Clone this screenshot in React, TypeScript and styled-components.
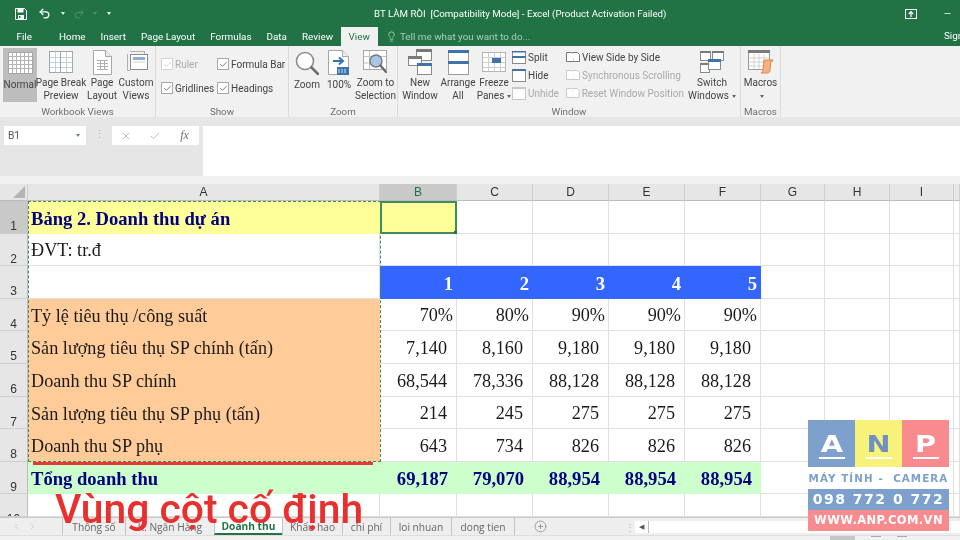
import React from 'react';
import styled, { createGlobalStyle } from 'styled-components';
import { Check, ChevronLeft, ChevronRight, CirclePlus, Lightbulb, Minus, Redo2, Undo2, X } from 'lucide-react';

const GlobalStyle = createGlobalStyle`
  html, body { margin: 0; padding: 0; background: #fff; }
  body { font-family: Roboto, "Liberation Sans", sans-serif; }
`;

const Page = styled.div`
  position: relative;
  width: 960px;
  height: 540px;
  overflow: hidden;
  display: flex;
  flex-direction: column;
  background: #f1f1f1;
  filter: blur(0.3px);
`;

/* title bar + tabs */
const TitleBar = styled.div`
  height: 27px;
  flex: none;
  background: #217346;
  color: #fff;
  display: flex;
  align-items: center;
  font-size: 9.7px;
`;
const QuickAccess = styled.div`
  width: 374px;
  flex: none;
  display: flex;
  align-items: center;
  padding-left: 15px;
  box-sizing: border-box;
`;
const QuickSpacer = styled.span<{ $w: number }>`
  display: inline-flex;
  width: ${p => p.$w}px;
  justify-content: center;
  align-items: center;
`;
const TinyCaret = styled.span<{ $dim?: boolean }>`
  width: 0;
  height: 0;
  border-left: 2.5px solid transparent;
  border-right: 2.5px solid transparent;
  border-top: 3px solid ${p => (p.$dim ? '#4f9270' : '#e8f2ec')};
`;
const DocTitle = styled.div`
  flex: 1;
  white-space: pre;
`;
const WindowButtons = styled.div`
  display: flex;
  align-items: center;
  gap: 26px;
  margin-right: 8px;
`;
const TabRow = styled.div`
  height: 19px;
  flex: none;
  background: #217346;
  display: flex;
  align-items: stretch;
  font-size: 9.9px;
  padding-left: 9px;
  position: relative;
`;
const RibbonTab = styled.div<{ $active?: boolean; $gap?: number }>`
  padding: 0 ${p => (p.$active ? 8 : 7.5)}px 1px;
  margin-right: ${p => p.$gap ?? 0}px;
  display: flex;
  align-items: center;
  color: ${p => (p.$active ? '#217346' : '#fff')};
  background: ${p => (p.$active ? '#f1f1f1' : 'transparent')};
`;
const TellMe = styled.div`
  display: flex;
  align-items: center;
  gap: 3px;
  margin-left: 8px;
  padding-bottom: 1px;
  color: #a9cdb9;
`;
const SignIn = styled.div`
  position: absolute;
  left: 944px;
  top: 3px;
  color: #fff;
  white-space: nowrap;
`;

/* ribbon */
const Ribbon = styled.div`
  height: 71px;
  flex: none;
  background: #f1f1f1;
  display: flex;
  color: #444;
  font-size: 10px;
`;
const Group = styled.div<{ $w: number }>`
  width: ${p => p.$w}px;
  flex: none;
  box-sizing: border-box;
  display: flex;
  flex-direction: column;
  border-right: 1px solid #dcdcdc;
`;
const GroupBody = styled.div<{ $pad?: number }>`
  height: 59px;
  box-sizing: border-box;
  padding: 2px 0 0 ${p => p.$pad ?? 0}px;
  display: flex;
  align-items: flex-start;
`;
const GroupLabel = styled.div`
  height: 12px;
  line-height: 13px;
  text-align: center;
  color: #6e6e6e;
  font-size: 9.8px;
`;
const BigButton = styled.div<{ $w: number; $active?: boolean }>`
  width: ${p => p.$w}px;
  height: 54px;
  flex: none;
  display: flex;
  flex-direction: column;
  align-items: center;
  background: ${p => (p.$active ? '#bdbdbd' : 'transparent')};
`;
const IconSlot = styled.div`
  height: 30px;
  display: flex;
  align-items: center;
  justify-content: center;
`;
const BigLabel = styled.div`
  line-height: 13px;
  text-align: center;
  white-space: pre;
`;
const ShowGrid = styled.div`
  display: grid;
  grid-template-columns: 56px 70px;
  grid-auto-rows: 24px;
  padding: 4px 0 0 5px;
`;
const CheckRow = styled.div<{ $off?: boolean }>`
  display: flex;
  align-items: center;
  gap: 2px;
  color: ${p => (p.$off ? '#aaa' : '#444')};
  white-space: nowrap;
`;
const CheckBox = styled.span<{ $off?: boolean }>`
  width: 10px;
  height: 10px;
  flex: none;
  background: #fff;
  border: 1px solid ${p => (p.$off ? '#d4d4d4' : '#a8a8a8')};
  display: flex;
  align-items: center;
  justify-content: center;
  color: ${p => (p.$off ? '#c4c4c4' : '#555')};
`;
const SmallColumn = styled.div<{ $w: number }>`
  width: ${p => p.$w}px;
  flex: none;
  display: flex;
  flex-direction: column;
`;
const SmallRow = styled.div<{ $off?: boolean }>`
  height: 18px;
  display: flex;
  align-items: center;
  gap: 2px;
  white-space: nowrap;
  color: ${p => (p.$off ? '#aaa' : '#444')};
`;
const Caret = styled.span`
  display: inline-block;
  width: 0;
  height: 0;
  margin-left: 3px;
  vertical-align: middle;
  border-left: 2.5px solid transparent;
  border-right: 2.5px solid transparent;
  border-top: 3px solid #666;
`;

/* formula bar */
const FormulaArea = styled.div`
  height: 67px;
  flex: none;
  background: #e6e6e6;
  display: flex;
  align-items: flex-start;
  padding-top: 9px;
  box-sizing: border-box;
  border-bottom: 8px solid #f0f0f0;
`;
const NameBox = styled.div`
  width: 82px;
  height: 19px;
  margin-left: 4px;
  background: #fff;
  display: flex;
  align-items: center;
  justify-content: space-between;
  padding: 0 6px 0 4px;
  box-sizing: border-box;
  font-size: 10.2px;
  color: #555;
`;
const Grip = styled.div`
  width: 26px;
  height: 19px;
  flex: none;
  color: #b0b0b0;
  font-size: 11px;
  line-height: 17px;
  text-align: center;
  letter-spacing: 0;
`;
const FormulaTools = styled.div`
  width: 87px;
  height: 19px;
  background: #fff;
  display: grid;
  grid-template-columns: 28px 30px 29px;
  align-items: center;
  justify-items: center;
  color: #c0c0c0;
`;
const FxLabel = styled.span`
  font-family: "Liberation Serif", serif;
  font-style: italic;
  font-size: 12px;
  color: #707070;
`;
const FormulaInput = styled.div`
  flex: 1;
  height: 50px;
  margin-left: 4px;
  background: #fff;
`;

/* sheet */
const Sheet = styled.div`
  position: relative;
  height: 333px;
  flex: none;
  overflow: hidden;
  background: #fff;
  display: grid;
  grid-template-columns: 28px 352px 77px 76px 76px 76px 76px 64px 65px 64px 6px;
  grid-template-rows: 17px 33px 32px 33px 32px 33px 33px 32px 33px 32px 23px;
`;
const Corner = styled.div`
  background: #e6e6e6;
  border-right: 1px solid #d0d0d0;
  border-bottom: 1px solid #bcbcbc;
  position: relative;
  &::after {
    content: '';
    position: absolute;
    right: 2px;
    bottom: 2px;
    border-left: 12px solid transparent;
    border-bottom: 12px solid #b4b4b4;
  }
`;
const ColHead = styled.div<{ $active?: boolean }>`
  background: ${p => (p.$active ? '#c9c9c9' : '#e6e6e6')};
  color: ${p => (p.$active ? '#217346' : '#333')};
  border-right: 1px solid #cfcfcf;
  border-bottom: 1px solid #bcbcbc;
  font: 12px "Liberation Sans", sans-serif;
  display: flex;
  align-items: center;
  justify-content: center;
`;
const RowHead = styled.div<{ $active?: boolean }>`
  background: ${p => (p.$active ? '#c9c9c9' : '#e6e6e6')};
  color: #333;
  border-bottom: 1px solid #cfcfcf;
  border-right: 1px solid #bcbcbc;
  font: 12px/14px "Liberation Sans", sans-serif;
  text-align: center;
  padding-top: 18px;
  box-sizing: border-box;
  overflow: hidden;
`;
const Cell = styled.div<{ $fill?: string; $color?: string; $bold?: boolean; $right?: number; $selected?: boolean }>`
  position: relative;
  box-sizing: border-box;
  display: flex;
  align-items: center;
  justify-content: ${p => (p.$right !== undefined ? 'flex-end' : 'flex-start')};
  padding: 2px ${p => p.$right ?? 0}px 0 ${p => (p.$right !== undefined ? 0 : 3)}px;
  background: ${p => p.$fill ?? '#fff'};
  color: ${p => p.$color ?? '#1a1a1a'};
  font-family: "Liberation Serif", serif;
  font-size: ${p => (p.$bold ? 18.6 : 18.2)}px;
  font-weight: ${p => (p.$bold ? 700 : 400)};
  white-space: nowrap;
  ${p => (p.$fill ? '' : 'border-right: 1px solid #e0e0e0; border-bottom: 1px solid #e0e0e0;')}
  ${p =>
    p.$selected
      ? `box-shadow: inset 0 0 0 2px #3f8a5f;
         &::after {
           content: '';
           position: absolute;
           right: -1px;
           bottom: -1px;
           width: 4px;
           height: 4px;
           background: #217346;
         }`
      : ''}
`;
const CopyMarquee = styled.div`
  position: absolute;
  left: 28px;
  top: 17px;
  width: 353px;
  height: 261px;
  box-sizing: border-box;
  border: 1px dashed #3f8a5f;
  pointer-events: none;
`;
const RedUnderline = styled.div`
  position: absolute;
  left: 33px;
  top: 278px;
  width: 340px;
  height: 3px;
  background: #e53935;
`;

/* bottom */
const SheetTabs = styled.div`
  height: 18px;
  flex: none;
  background: #eeeeee;
  border-top: 1px solid #c8c8c8;
  box-sizing: border-box;
  display: flex;
  align-items: center;
  font-family: "Open Sans", sans-serif;
  font-size: 10.2px;
  color: #666;
`;
const TabNav = styled.div`
  width: 62px;
  flex: none;
  display: flex;
  padding-left: 12px;
  gap: 7px;
  box-sizing: border-box;
  color: #c4c4c4;
`;
const SheetTab = styled.div<{ $w: number; $active?: boolean }>`
  width: ${p => p.$w}px;
  height: 17px;
  flex: none;
  box-sizing: border-box;
  display: flex;
  align-items: center;
  justify-content: center;
  border-left: 1px solid #c4c4c4;
  color: ${p => (p.$active ? '#217346' : '#666')};
  font-weight: ${p => (p.$active ? 700 : 400)};
  background: ${p => (p.$active ? '#fff' : 'transparent')};
  border-bottom: ${p => (p.$active ? '2px solid #217346' : 'none')};
  white-space: nowrap;
`;
const TabEnd = styled.div`
  width: 1px;
  height: 17px;
  background: #c4c4c4;
`;
const AddSheet = styled.div`
  margin-left: 19px;
  color: #888;
  display: flex;
`;
const ScrollDots = styled.div`
  margin-left: 78px;
  color: #b4b4b4;
  font-size: 10px;
`;
const ScrollLeft = styled.div`
  margin-left: 0;
  width: 13px;
  height: 12px;
  background: #fff;
  display: flex;
  align-items: center;
  justify-content: center;
  color: #555;
  font-size: 7px;
  border-right: 1px solid #bbb;
`;
const ScrollTrack = styled.div`
  flex: 1;
  height: 12px;
  background: #fff;
`;
const StatusBar = styled.div`
  flex: 1;
  background: #f1f1f1;
  border-top: 1px solid #dedede;
  display: flex;
  padding-left: 830px;
  gap: 16px;
`;
const StatusMark = styled.div<{ $on?: boolean }>`
  width: ${p => (p.$on ? 25 : 10)}px;
  background: ${p => (p.$on ? '#c6c6c6' : 'transparent')};
  border-top: ${p => (p.$on ? 'none' : '1px solid #aaa')};
`;

/* overlays */
const Caption = styled.div`
  position: absolute;
  left: 55px;
  top: 486px;
  font-family: Roboto, "Liberation Sans", sans-serif;
  font-size: 40.8px;
  line-height: 46px;
  font-weight: 500;
  color: #e8302f;
  white-space: nowrap;
`;
const Logo = styled.div`
  position: absolute;
  left: 808px;
  top: 420px;
  width: 141px;
  display: flex;
  flex-direction: column;
  font-family: "DejaVu Sans", sans-serif;
  font-weight: 700;
`;
const LogoSquares = styled.div`
  display: grid;
  grid-template-columns: repeat(3, 47px);
  height: 47px;
`;
const LogoSquare = styled.div<{ $bg: string; $fg: string }>`
  background: ${p => p.$bg};
  color: ${p => p.$fg};
  display: flex;
  flex-direction: column;
  align-items: center;
  padding-top: 13px;
  box-sizing: border-box;
  font-size: 23px;
  line-height: 23px;
  span { display: block; transform: scaleX(1.25); }
  &::after {
    content: '';
    width: 26px;
    height: 1.5px;
    margin-top: 1px;
    background: #fff;
  }
`;
const LogoTagline = styled.div`
  height: 22px;
  line-height: 23px;
  color: #7da0cc;
  font-size: 10.3px;
  white-space: pre;
  text-align: center;
  background: #fff;
  letter-spacing: 1.1px;
`;
const LogoBand = styled.div<{ $bg: string; $size: number; $track: number }>`
  height: 21px;
  line-height: 21px;
  background: ${p => p.$bg};
  color: #fff;
  font-size: ${p => p.$size}px;
  letter-spacing: ${p => p.$track}px;
  text-align: center;
  white-space: nowrap;
`;

/* ribbon drawings */
const Line = '#a6a6a6';
const SheetGridIcon = () => (
  <svg width="25" height="22" viewBox="0 0 25 22">
    <rect x=".5" y=".5" width="24" height="21" fill="#fff" stroke={Line} />
    {[4, 8, 12, 16, 20].map(x => <path key={x} d={`M${x + 0.5} 1v20`} stroke="#b5b5b5" />)}
    {[4, 8, 12, 16].map(y => <path key={y} d={`M1 ${y + 0.5}h23`} stroke="#b5b5b5" />)}
  </svg>
);
const PageBreakIcon = () => (
  <svg width="24" height="22" viewBox="0 0 24 22">
    <rect x=".5" y=".5" width="23" height="21" fill="#fff" stroke={Line} />
    {[6, 17].map(x => <path key={x} d={`M${x + 0.5} 1v20`} stroke="#c3cfdd" />)}
    {[6, 11, 16].map(y => <path key={y} d={`M1 ${y + 0.5}h22`} stroke="#c3cfdd" />)}
    <path d="M11.5 1v20" stroke="#8da6c4" />
  </svg>
);
const PageLayoutIcon = () => (
  <svg width="19" height="25" viewBox="0 0 19 25">
    <path d="M.5.5h12l6 6v18H.5z" fill="#fff" stroke={Line} />
    <path d="M12.5.5v6h6" fill="#eee" stroke={Line} />
    {[10, 13, 16, 19].map(y => <path key={y} d={`M4 ${y + 0.5}h11`} stroke="#b0b0b0" />)}
    <path d="M7.5 10v10M11.5 10v10" stroke="#b0b0b0" />
  </svg>
);
const CustomViewsIcon = () => (
  <svg width="24" height="23" viewBox="0 0 24 23">
    <path d="M3.5 3v17M3 19.5h3M20.5 1v2M6 .5h15" stroke="#b0b0b0" fill="none" />
    <rect x="6.5" y="3.5" width="17" height="15" fill="#fff" stroke="#8a8a8a" />
    <rect x="9" y="6" width="12" height="3" fill="#8fb0d6" />
    <path d="M9 11h12" stroke="#d0d0d0" />
  </svg>
);
const MagnifierIcon = () => (
  <svg width="24" height="24" viewBox="0 0 24 24">
    <circle cx="10" cy="10" r="8.5" fill="#fff" stroke="#8c8c8c" strokeWidth="1.6" />
    <path d="M16.5 16.5L23 23" stroke="#6e6e6e" strokeWidth="2.6" strokeLinecap="round" />
  </svg>
);
const HundredIcon = () => (
  <svg width="22" height="26" viewBox="0 0 22 26">
    <path d="M.5.5h14l6 6v18H.5z" fill="#fff" stroke={Line} />
    <path d="M14.5.5v6h6" fill="#eee" stroke={Line} />
    <path d="M5 11h9M11 7.5l4 3.5-4 3.5" fill="none" stroke="#2f75b5" strokeWidth="2" />
    <rect x="9" y="17" width="12" height="8" fill="#3f73ac" />
    <path d="M11 19v4M14 19v4M17 19v4" stroke="#cfe0f2" />
  </svg>
);
const ZoomSelectionIcon = () => (
  <svg width="26" height="24" viewBox="0 0 26 24">
    <rect x=".5" y=".5" width="23" height="19" fill="#fff" stroke={Line} />
    <path d="M6.5 1v18M1 6.5h22M1 13h6" stroke="#c0c0c0" />
    <circle cx="13" cy="11" r="6" fill="#a9c6e6" stroke="#777" strokeWidth="1.4" />
    <path d="M17.5 15.5L23 22" stroke="#666" strokeWidth="2.2" strokeLinecap="round" />
  </svg>
);
const NewWindowIcon = () => (
  <svg width="24" height="26" viewBox="0 0 24 26">
    <rect x="8.5" y=".5" width="15" height="11" fill="#fff" stroke="#8a8a8a" />
    <rect x="8" y="0" width="16" height="3" fill="#7a7a7a" />
    <rect x=".5" y="7.5" width="13" height="9" fill="#fff" stroke="#8a8a8a" />
    <rect x="0" y="7" width="14" height="3" fill="#7a7a7a" />
    <rect x="9.5" y="14.5" width="14" height="11" fill="#fff" stroke="#8a8a8a" />
    <rect x="9" y="14" width="15" height="3" fill="#3f73ac" />
  </svg>
);
const ArrangeIcon = () => (
  <svg width="21" height="25" viewBox="0 0 21 25">
    <rect x=".5" y=".5" width="20" height="24" fill="#fff" stroke="#9a9a9a" />
    <rect x="0" y="0" width="21" height="3" fill="#3f73ac" />
    <rect x="0" y="11" width="21" height="3" fill="#3f73ac" />
  </svg>
);
const FreezeIcon = () => (
  <svg width="24" height="20" viewBox="0 0 24 20">
    <rect x=".5" y=".5" width="23" height="19" fill="#fff" stroke="#b5b5b5" />
    <path d="M6.5 1v18M12.5 1v18M18.5 1v18M1 5.5h22M1 10.5h22M1 15.5h22" stroke="#cfcfcf" />
    <rect x="10" y="6" width="9" height="5" fill="#3f73ac" />
  </svg>
);
const BarIcon = ({ bar = '#3f73ac', mid = false }: { bar?: string; mid?: boolean }) => (
  <svg width="14" height="13" viewBox="0 0 14 13">
    <rect x=".5" y=".5" width="13" height="12" fill="#fff" stroke={bar === '#3f73ac' ? '#8a8a8a' : '#c8c8c8'} />
    <rect x="0" y={mid ? 5 : 0} width="14" height="2" fill={bar} />
    {mid && <rect x="0" y="0" width="14" height="1.5" fill={bar} />}
  </svg>
);
const SideBySideIcon = ({ off }: { off?: boolean }) => (
  <svg width="14" height="12" viewBox="0 0 14 12">
    <path d="M.5 1.5h5l2 2v7h-7z" fill="#fff" stroke={off ? '#c8c8c8' : '#777'} />
    <path d="M6.5 1.5h5l2 2v7h-6" fill="#fff" stroke={off ? '#c8c8c8' : '#777'} />
  </svg>
);
const SwitchIcon = () => (
  <svg width="24" height="22" viewBox="0 0 24 22">
    <rect x=".5" y=".5" width="10" height="9" fill="#fff" stroke="#8a8a8a" />
    <rect x="0" y="0" width="11" height="2" fill="#7a7a7a" />
    <rect x="12.5" y=".5" width="11" height="9" fill="#fff" stroke="#8a8a8a" />
    <rect x="12" y="0" width="12" height="2" fill="#7a7a7a" />
    <rect x=".5" y="12.5" width="9" height="9" fill="#fff" stroke="#8a8a8a" />
    <rect x="0" y="12" width="10" height="2" fill="#7a7a7a" />
    <rect x="8.5" y="8.5" width="12" height="10" fill="#fff" stroke="#7a8ca0" />
    <rect x="8" y="8" width="13" height="3" fill="#3f73ac" />
  </svg>
);
const MacrosIcon = () => (
  <svg width="26" height="24" viewBox="0 0 26 24">
    <rect x=".5" y=".5" width="21" height="19" fill="#fff" stroke="#9a9a9a" />
    <rect x="0" y="0" width="22" height="3" fill="#7a7a7a" />
    <path d="M1 8h20M1 12h20M1 16h20M6 4v15M11 4v15M16 4v15" stroke="#d2d2d2" />
    <path d="M16 10h7l-1 10c0 2-1 3-3 3h-6c1-1 2-2 2-3z" fill="#f4b183" stroke="#e08a3c" />
    <path d="M23 11l2-1" stroke="#e08a3c" strokeWidth="2" />
  </svg>
);
const SaveIcon = () => (
  <svg width="12" height="12" viewBox="0 0 12 12">
    <path d="M.5.5h9l2 2v9H.5z" fill="none" stroke="#fff" />
    <rect x="2.5" y="1" width="6" height="3.5" fill="#fff" />
    <rect x="3" y="7" width="6" height="4" fill="#fff" />
    <rect x="4" y="8" width="1.4" height="2" fill="#217346" />
  </svg>
);
const RestoreIcon = () => (
  <svg width="12" height="10" viewBox="0 0 12 10">
    <rect x=".5" y=".5" width="11" height="9" fill="none" stroke="#fff" />
    <path d="M6 8V3M3.8 5L6 2.6 8.2 5" fill="none" stroke="#fff" strokeWidth="1.2" />
  </svg>
);

const checks = [
  { label: 'Ruler', off: true },
  { label: 'Formula Bar' },
  { label: 'Gridlines' },
  { label: 'Headings' }
];

const tabs: { label: string; gap?: number; active?: boolean }[] = [
  { label: 'File', gap: 12 },
  { label: 'Home' },
  { label: 'Insert' },
  { label: 'Page Layout' },
  { label: 'Formulas' },
  { label: 'Data' },
  { label: 'Review' },
  { label: 'View', active: true }
];

const columns = ['C', 'D', 'E', 'F', 'G', 'H', 'I'];
const PCT = 3;
const ACC = 9;
const dataRows = [
  { label: 'Tỷ lệ tiêu thụ /công suất', values: ['70%', '80%', '90%', '90%', '90%'], right: PCT },
  { label: 'Sản lượng tiêu thụ SP chính (tấn)', values: ['7,140', '8,160', '9,180', '9,180', '9,180'], right: ACC },
  { label: 'Doanh thu SP chính', values: ['68,544', '78,336', '88,128', '88,128', '88,128'], right: ACC },
  { label: 'Sản lượng tiêu thụ SP phụ (tấn)', values: ['214', '245', '275', '275', '275'], right: ACC },
  { label: 'Doanh thu SP phụ', values: ['643', '734', '826', '826', '826'], right: ACC }
];
const totals = ['69,187', '79,070', '88,954', '88,954', '88,954'];
const sheetTabs = [
  { name: 'Thông số', w: 63 },
  { name: 'K. Ngân Hàng', w: 89 },
  { name: 'Doanh thu', w: 68 },
  { name: 'Khấu hao', w: 60 },
  { name: 'chi phí', w: 48 },
  { name: 'loi nhuan', w: 61 },
  { name: 'dong tien', w: 63 }
];

const YELLOW = '#ffff99';
const ORANGE = '#ffcc99';
const GREEN = '#ccffcc';
const BLUE = '#3366ff';
const NAVY = '#000080';

const Blanks = ({ count }: { count: number }) => (
  <>
    {Array.from({ length: count }, (_, i) => (
      <Cell key={i} />
    ))}
  </>
);

export default function App() {
  return (
    <Page>
      <GlobalStyle />
      <TitleBar>
        <QuickAccess>
          <SaveIcon />
          <QuickSpacer $w={34}><Undo2 size={13} strokeWidth={2.4} /></QuickSpacer>
          <TinyCaret />
          <QuickSpacer $w={28}><Redo2 size={12} color="#4f9270" /></QuickSpacer>
          <TinyCaret $dim />
          <QuickSpacer $w={24}><TinyCaret /></QuickSpacer>
        </QuickAccess>
        <DocTitle>{'BT LÀM RÒI  [Compatibility Mode] - Excel (Product Activation Failed)'}</DocTitle>
        <WindowButtons>
          <RestoreIcon />
          <Minus size={9} strokeWidth={2} />
        </WindowButtons>
      </TitleBar>
      <TabRow>
        {tabs.map(t => (
          <RibbonTab key={t.label} $gap={t.gap} $active={t.active}>{t.label}</RibbonTab>
        ))}
        <TellMe>
          <Lightbulb size={11} />
          Tell me what you want to do...
        </TellMe>
        <SignIn>Sign in</SignIn>
      </TabRow>

      <Ribbon>
        <Group $w={156}>
          <GroupBody $pad={3}>
            <BigButton $w={34} $active><IconSlot><SheetGridIcon /></IconSlot><BigLabel>Normal</BigLabel></BigButton>
            <BigButton $w={48}><IconSlot><PageBreakIcon /></IconSlot><BigLabel>{'Page Break\nPreview'}</BigLabel></BigButton>
            <BigButton $w={34}><IconSlot><PageLayoutIcon /></IconSlot><BigLabel>{'Page\nLayout'}</BigLabel></BigButton>
            <BigButton $w={34}><IconSlot><CustomViewsIcon /></IconSlot><BigLabel>{'Custom\nViews'}</BigLabel></BigButton>
          </GroupBody>
          <GroupLabel>Workbook Views</GroupLabel>
        </Group>
        <Group $w={133}>
          <GroupBody>
            <ShowGrid>
              {checks.map(c => (
                <CheckRow key={c.label} $off={c.off}>
                  <CheckBox $off={c.off}><Check size={9} strokeWidth={2} /></CheckBox>
                  {c.label}
                </CheckRow>
              ))}
            </ShowGrid>
          </GroupBody>
          <GroupLabel>Show</GroupLabel>
        </Group>
        <Group $w={109}>
          <GroupBody $pad={2}>
            <BigButton $w={32}><IconSlot><MagnifierIcon /></IconSlot><BigLabel>Zoom</BigLabel></BigButton>
            <BigButton $w={32}><IconSlot><HundredIcon /></IconSlot><BigLabel>100%</BigLabel></BigButton>
            <BigButton $w={41}><IconSlot><ZoomSelectionIcon /></IconSlot><BigLabel>{'Zoom to\nSelection'}</BigLabel></BigButton>
          </GroupBody>
          <GroupLabel>Zoom</GroupLabel>
        </Group>
        <Group $w={343}>
          <GroupBody $pad={2}>
            <BigButton $w={40}><IconSlot><NewWindowIcon /></IconSlot><BigLabel>{'New\nWindow'}</BigLabel></BigButton>
            <BigButton $w={36}><IconSlot><ArrangeIcon /></IconSlot><BigLabel>{'Arrange\nAll'}</BigLabel></BigButton>
            <BigButton $w={36}><IconSlot><FreezeIcon /></IconSlot><BigLabel>Freeze<br />Panes<Caret /></BigLabel></BigButton>
            <SmallColumn $w={54}>
              <SmallRow><BarIcon mid />Split</SmallRow>
              <SmallRow><BarIcon />Hide</SmallRow>
              <SmallRow $off><BarIcon bar="#c8c8c8" />Unhide</SmallRow>
            </SmallColumn>
            <SmallColumn $w={118}>
              <SmallRow><SideBySideIcon />View Side by Side</SmallRow>
              <SmallRow $off><SideBySideIcon off />Synchronous Scrolling</SmallRow>
              <SmallRow $off><SideBySideIcon off />Reset Window Position</SmallRow>
            </SmallColumn>
            <BigButton $w={56}><IconSlot><SwitchIcon /></IconSlot><BigLabel>Switch<br />Windows<Caret /></BigLabel></BigButton>
          </GroupBody>
          <GroupLabel>Window</GroupLabel>
        </Group>
        <Group $w={40}>
          <GroupBody>
            <BigButton $w={39}><IconSlot><MacrosIcon /></IconSlot><BigLabel>Macros<br /><Caret /></BigLabel></BigButton>
          </GroupBody>
          <GroupLabel>Macros</GroupLabel>
        </Group>
      </Ribbon>

      <FormulaArea>
        <NameBox>B1<TinyCaret $dim /></NameBox>
        <Grip>⋮</Grip>
        <FormulaTools>
          <X size={12} />
          <Check size={12} />
          <FxLabel>fx</FxLabel>
        </FormulaTools>
        <FormulaInput />
      </FormulaArea>

      <Sheet>
        <Corner />
        <ColHead>A</ColHead>
        <ColHead $active>B</ColHead>
        {columns.map(c => <ColHead key={c}>{c}</ColHead>)}
        <ColHead />

        <RowHead $active>1</RowHead>
        <Cell $fill={YELLOW} $color={NAVY} $bold>Bảng 2. Doanh thu dự án</Cell>
        <Cell $fill={YELLOW} $selected />
        <Blanks count={8} />

        <RowHead>2</RowHead>
        <Cell>ĐVT: tr.đ</Cell>
        <Blanks count={9} />

        <RowHead>3</RowHead>
        <Cell />
        {[1, 2, 3, 4, 5].map(n => (
          <Cell key={n} $fill={BLUE} $color="#fff" $bold $right={4}>{n}</Cell>
        ))}
        <Blanks count={4} />

        {dataRows.map((row, i) => (
          <React.Fragment key={row.label}>
            <RowHead>{i + 4}</RowHead>
            <Cell $fill={ORANGE}>{row.label}</Cell>
            {row.values.map((v, j) => (
              <Cell key={j} $right={row.right}>{v}</Cell>
            ))}
            <Blanks count={4} />
          </React.Fragment>
        ))}

        <RowHead>9</RowHead>
        <Cell $fill={GREEN} $color={NAVY} $bold>Tổng doanh thu</Cell>
        {totals.map((v, j) => (
          <Cell key={j} $fill={GREEN} $color={NAVY} $bold $right={ACC}>{v}</Cell>
        ))}
        <Blanks count={4} />

        <RowHead>10</RowHead>
        <Blanks count={10} />

        <CopyMarquee />
        <RedUnderline />
      </Sheet>

      <SheetTabs>
        <TabNav>
          <ChevronLeft size={9} />
          <ChevronRight size={9} />
        </TabNav>
        {sheetTabs.map(t => (
          <SheetTab key={t.name} $w={t.w} $active={t.name === 'Doanh thu'}>{t.name}</SheetTab>
        ))}
        <TabEnd />
        <AddSheet><CirclePlus size={13} strokeWidth={1.4} /></AddSheet>
        <ScrollDots>⋮</ScrollDots>
        <ScrollLeft>◀</ScrollLeft>
        <ScrollTrack />
      </SheetTabs>
      <StatusBar>
        <StatusMark $on />
        <StatusMark />
        <StatusMark />
      </StatusBar>

      <Caption>Vùng cột cố định</Caption>
      <Logo>
        <LogoSquares>
          <LogoSquare $bg="#7da0cc" $fg="#fff"><span>A</span></LogoSquare>
          <LogoSquare $bg="#f7f37a" $fg="#6f90c0"><span>N</span></LogoSquare>
          <LogoSquare $bg="#f98a8e" $fg="#fff"><span>P</span></LogoSquare>
        </LogoSquares>
        <LogoTagline>{'MÁY TÍNH -  CAMERA'}</LogoTagline>
        <LogoBand $bg="#7da0cc" $size={14} $track={1.5}>098 772 0 772</LogoBand>
        <LogoBand $bg="#f98a8e" $size={11.5} $track={0.4}>WWW.ANP.COM.VN</LogoBand>
      </Logo>
    </Page>
  );
}
